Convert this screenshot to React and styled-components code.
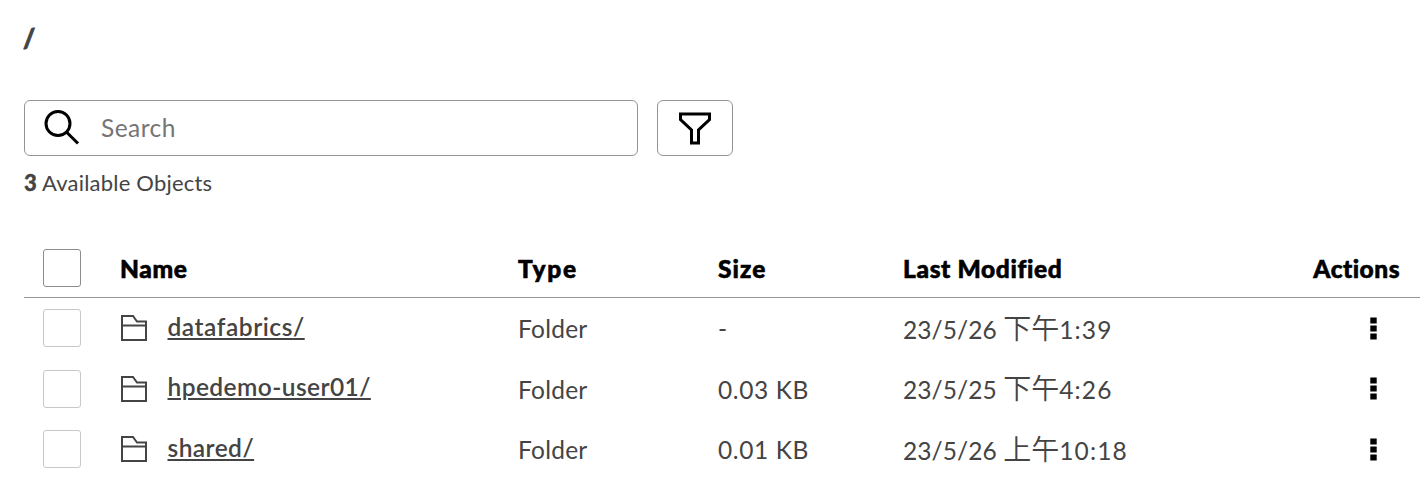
import React from "react";
import styled, { createGlobalStyle } from "styled-components";

const GlobalStyle = createGlobalStyle`
  * { box-sizing: border-box; }
  body {
    margin: 0;
    background: #fff;
    color: #444;
    font-family: Lato, "Noto Sans CJK TC", sans-serif;
    overflow: hidden;
  }
`;

const Page = styled.main`
  width: 1428px;
  height: 496px;
  padding: 20px 8px 0 24px;
  overflow: hidden;
`;

const Path = styled.h1`
  margin: 0 0 44px -1px;
  height: 36px;
  font-size: 26px;
  line-height: 37px;
  font-weight: 900;
  -webkit-text-stroke: 0.8px currentColor;
`;

const Toolbar = styled.div`
  display: flex;
  gap: 19px;
  height: 56px;
`;

const SearchBox = styled.label`
  display: flex;
  align-items: center;
  width: 614px;
  padding-left: 19px;
  gap: 21px;
  border: 1px solid #949494;
  border-radius: 6px;
  svg { margin-top: -2px; }
`;

const SearchInput = styled.input`
  flex: 1;
  min-width: 0;
  border: 0;
  padding: 0 0 1px;
  outline: 0;
  background: none;
  font: 400 24.5px/30px Lato, sans-serif;
  letter-spacing: 0.45px;
  &::placeholder { color: #757575; opacity: 1; }
`;

const FilterButton = styled.button`
  display: flex;
  align-items: center;
  justify-content: center;
  width: 76px;
  padding: 0;
  background: #fff;
  border: 1px solid #949494;
  border-radius: 6px;
`;

const Summary = styled.p`
  margin: 13px 0 0;
  height: 28px;
  font-size: 22px;
  line-height: 28px;
  letter-spacing: 0.2px;
  strong {
    font-weight: 900;
    -webkit-text-stroke: 0.4px currentColor;
  }
`;

const Text = styled.span`
  letter-spacing: ${(p) => p.$track || 0}px;
`;

const Row = styled.div`
  display: grid;
  grid-template-columns: 96px 398px 200px 185px 1fr 150px;
  align-items: center;
  height: 60.5px;
  font-size: 24.5px;
  line-height: 30px;
  white-space: nowrap;
`;

const HeaderRow = styled(Row)`
  margin-top: 41px;
  height: 60px;
  border-bottom: 1px solid #949494;
  color: #000;
  font-weight: 900;
  -webkit-text-stroke: 0.6px currentColor;
`;

const Checkbox = styled.span`
  width: 38px;
  height: 38px;
  margin-left: 19px;
  border: 1px solid ${(p) => (p.$strong ? "#8c8c8c" : "#c8c8c8")};
  border-radius: 3px;
`;

const NameCell = styled.div`
  display: flex;
  align-items: center;
  gap: 19.5px;
  svg { display: block; }
`;

const FolderLink = styled.a`
  color: #444;
  font-weight: 600;
  padding-bottom: 3px;
  letter-spacing: ${(p) => p.$track}px;
  text-decoration: underline;
  text-decoration-thickness: 2px;
  text-underline-offset: 2px;
`;

const Cell = styled.div`
  padding-top: ${(p) => (p.$head ? 3 : 2)}px;
`;

const DateCell = styled(Cell)`
  padding-top: 1px;
`;

const Meridiem = styled.span`
  font-family: "Noto Sans CJK TC", sans-serif;
  font-size: 28px;
  font-weight: 350;
  line-height: 1;
`;

const ActionsCell = styled.div`
  display: flex;
  justify-content: flex-end;
  padding-right: ${(p) => (p.$head ? 20 : 43)}px;
  padding-top: ${(p) => (p.$head ? 3 : 0)}px;
`;

const SearchIcon = () => (
  <svg width="36" height="36" viewBox="0 0 36 36" fill="none" stroke="#000" strokeWidth="3">
    <circle cx="14" cy="14.5" r="12" />
    <path d="M22.7 23.2 34 34.5" />
  </svg>
);

const FilterIcon = () => (
  <svg width="32" height="33" viewBox="0 0 32 33" fill="none" stroke="#000" strokeWidth="3">
    <path d="M1.5 2H30.500V7.500L19.500 18V31H12.500V18L1.500 7.500Z" />
  </svg>
);

const FolderIcon = () => (
  <svg width="28" height="28" viewBox="0 0 28 28" fill="none" stroke="#444" strokeWidth="2">
    <path d="M2 2H13L17 7.500H26V26H2Z M2 11.500H26" />
  </svg>
);

const MoreIcon = () => (
  <svg width="7" height="23" viewBox="0 0 7 23" fill="#000">
    <path d="M.3 .5h6.400v6H.3zM.3 8.500h6.400v6H.3zM.3 16.500h6.400v6H.3z" />
  </svg>
);

const rows = [
  { name: "datafabrics/", track: 0.55, size: "-", date: "23/5/26", meridiem: "下午", time: "1:39" },
  { name: "hpedemo-user01/", track: 0.42, size: "0.03 KB", date: "23/5/25", meridiem: "下午", time: "4:26" },
  { name: "shared/", track: 0.45, size: "0.01 KB", date: "23/5/26", meridiem: "上午", time: "10:18" },
];

export default function App() {
  return (
    <Page>
      <GlobalStyle />
      <Path>/</Path>
      <Toolbar>
        <SearchBox>
          <SearchIcon />
          <SearchInput placeholder="Search" />
        </SearchBox>
        <FilterButton aria-label="Filter"><FilterIcon /></FilterButton>
      </Toolbar>
      <Summary><strong>3</strong> Available Objects</Summary>
      <HeaderRow>
        <Checkbox $strong />
        <Cell $head><Text $track={0.6}>Name</Text></Cell>
        <Cell $head><Text $track={1.7}>Type</Text></Cell>
        <Cell $head><Text $track={1.1}>Size</Text></Cell>
        <Cell $head><Text $track={0.65}>Last Modified</Text></Cell>
        <ActionsCell $head><Text $track={0.5}>Actions</Text></ActionsCell>
      </HeaderRow>
      {rows.map((row) => (
        <Row key={row.name}>
          <Checkbox />
          <NameCell>
            <FolderIcon />
            <FolderLink $track={row.track}>{row.name}</FolderLink>
          </NameCell>
          <Cell><Text $track={0.25}>Folder</Text></Cell>
          <Cell><Text $track={0.6}>{row.size}</Text></Cell>
          <DateCell>
            <Text $track={0.1}>{row.date} </Text>
            <Meridiem>{row.meridiem}</Meridiem>
            <Text $track={1.1}>{row.time}</Text>
          </DateCell>
          <ActionsCell><MoreIcon /></ActionsCell>
        </Row>
      ))}
    </Page>
  );
}
